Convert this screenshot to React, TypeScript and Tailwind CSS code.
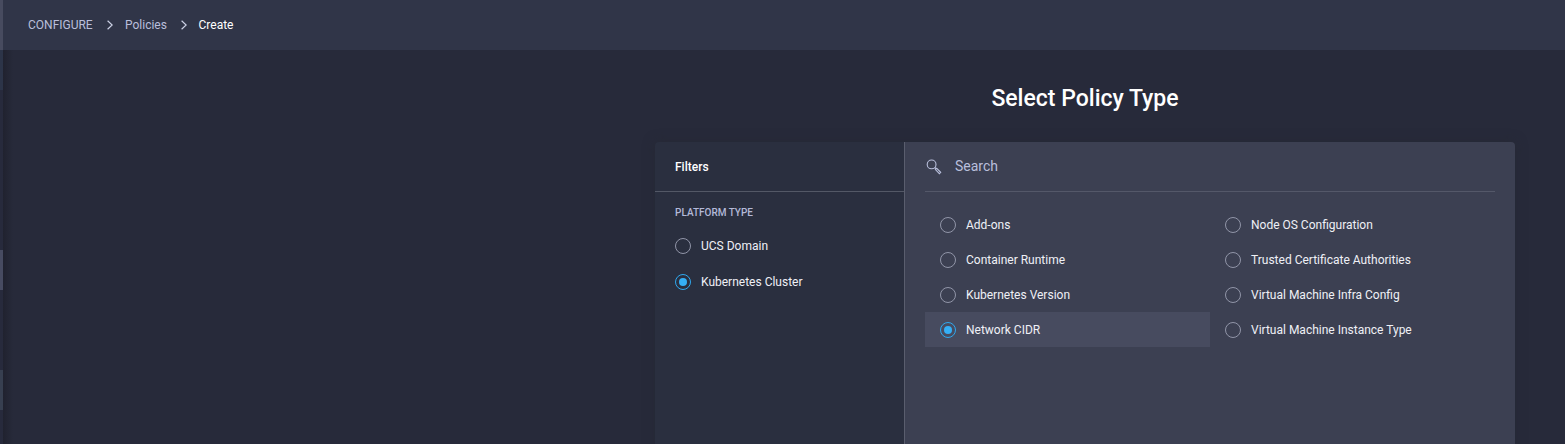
import React from "react";

function Radio({ checked = false }: { checked?: boolean }) {
  return (
    <span
      className={
        checked
          ? "flex size-4 shrink-0 items-center justify-center rounded-full border border-[#2fa8ee]"
          : "flex size-4 shrink-0 rounded-full border border-[#9195a8]"
      }
    >
      {checked && <span className="size-2 rounded-full bg-[#35aff5]" />}
    </span>
  );
}

function Chevron() {
  return (
    <svg className="h-[10px] w-[6px] shrink-0" viewBox="0 0 6 10" fill="none" stroke="#cdd2e6" strokeWidth="1.2">
      <path d="M0.6 0.8 5.2 5 0.6 9.2" />
    </svg>
  );
}

function Option({ label, checked = false }: { label: string; checked?: boolean }) {
  return (
    <label
      className={
        checked
          ? "flex h-[35px] items-center gap-2.5 bg-[#474b5f] pl-[15px]"
          : "flex h-[35px] items-center gap-2.5 pl-[15px]"
      }
    >
      <Radio checked={checked} />
      <span>{label}</span>
    </label>
  );
}

const left = ["Add-ons", "Container Runtime", "Kubernetes Version", "Network CIDR"];
const right = [
  "Node OS Configuration",
  "Trusted Certificate Authorities",
  "Virtual Machine Infra Config",
  "Virtual Machine Instance Type",
];

export default function App() {
  return (
    <div className="flex h-[444px] w-[1565px] overflow-hidden bg-[#272a3a] font-['Roboto',sans-serif] text-xs leading-4 text-[#eff0f6]">
      <aside className="flex w-[3px] shrink-0 flex-col bg-[#272a3c]">
        <div className="h-[50px] bg-[#474b5f]" />
        <div className="h-10 bg-[#2c3448]" />
        <div className="mt-40 h-10 bg-[#474b61]" />
        <div className="mt-20 h-10 bg-[#373f50]" />
      </aside>
      <div className="flex min-w-0 flex-1 flex-col">
        <header className="flex h-[50px] shrink-0 items-center bg-[#303548] pl-[25px] text-[#b9bfdc]">
          <span className="w-[79px]">CONFIGURE</span>
          <Chevron />
          <span className="ml-3 w-[56px]">Policies</span>
          <Chevron />
          <span className="ml-[11.5px] text-white">Create</span>
        </header>
        <div className="flex min-h-0 flex-1">
          <div className="w-2.5 shrink-0 bg-linear-to-r from-[#20222f] to-[#272a3a]" />
          <main className="ml-[639px] mt-[33px] w-[863px] shrink-0">
            <h1 className="ml-[3px] h-[59px] w-[860px] text-center text-[23px] font-medium leading-[31px] text-white">
              Select Policy Type
            </h1>
            <section className="ml-[3px] flex h-[310px] w-[860px] overflow-hidden rounded-t-[4px] shadow-[0_0_12px_rgba(38,39,48,0.5)]">
              <div className="w-[250px] shrink-0 border-r border-[#5a5e6e] bg-[#2a2f3f]">
                <div className="flex h-[50px] items-center border-b border-[#535866] pl-5 font-medium text-white">Filters</div>
                <h2 className="mt-[13px] pl-5 text-[10px] font-medium text-[#b3b9d8]">PLATFORM TYPE</h2>
                <div className="mt-[17px] flex flex-col gap-5 pl-5">
                  <label className="flex items-center gap-2.5">
                    <Radio />
                    <span>UCS Domain</span>
                  </label>
                  <label className="flex items-center gap-2.5">
                    <Radio checked />
                    <span>Kubernetes Cluster</span>
                  </label>
                </div>
              </div>
              <div className="min-w-0 flex-1 bg-[#3c4052] px-5">
                <div className="flex h-[50px] items-center border-b border-[#545869] text-sm text-[#b9bfdc]">
                  <svg className="mr-3 h-[18px] w-[18px]" viewBox="0 0 18 18" fill="none" stroke="#b9bfdc" strokeWidth="1.1">
                    <circle cx="6.6" cy="6.4" r="4.4" />
                    <path d="m9.7 9.5 1.5 1.5M10.4 11.6l1.3-1.3 4 4-1.3 1.3z" />
                  </svg>
                  <span className="pb-px">Search</span>
                </div>
                <div className="grid grid-cols-2 pt-[15px]">
                  <div>
                    {left.map((label) => (
                      <Option key={label} label={label} checked={label === "Network CIDR"} />
                    ))}
                  </div>
                  <div>
                    {right.map((label) => (
                      <Option key={label} label={label} />
                    ))}
                  </div>
                </div>
              </div>
            </section>
          </main>
        </div>
      </div>
    </div>
  );
}
